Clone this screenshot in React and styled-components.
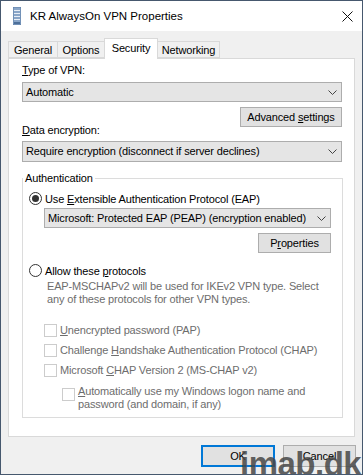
import React from "react";
import styled, { createGlobalStyle } from "styled-components";

const Global = createGlobalStyle`
  html, body { margin: 0; padding: 0; background: #fff; }
  * { box-sizing: border-box; }
`;

const FONT = `"Liberation Sans", Arial, sans-serif`;

const Window = styled.div`
  position: relative;
  width: 363px;
  height: 475px;
  border: 1px solid #46586e;
  display: flex;
  flex-direction: column;
  font-family: ${FONT};
  font-size: 11px;
  letter-spacing: -0.15px;
  color: #000;
  overflow: hidden;
`;

const TitleBar = styled.div`
  height: 30px;
  flex: none;
  background: #fff;
  display: flex;
  align-items: center;
  padding-left: 12px;
`;

const Title = styled.div`
  margin-left: 9px;
  font-size: 11.5px;
  letter-spacing: 0;
`;

const CloseBox = styled.div`
  margin-left: auto;
  margin-right: 9px;
  display: flex;
  align-items: center;
`;

const Body = styled.div`
  flex: 1;
  background: #f0f0f0;
  padding: 7px 6px 0 7px;
  display: flex;
  flex-direction: column;
`;

const TabStrip = styled.div`
  display: flex;
  align-items: flex-end;
  height: 20px;
`;

const Tab = styled.div`
  position: relative;
  width: ${(p) => p.$w}px;
  height: ${(p) => (p.$active ? 21 : 17)}px;
  margin-left: ${(p) => (p.$first ? 0 : -1)}px;
  margin-bottom: ${(p) => (p.$active ? -1 : 0)}px;
  padding-bottom: ${(p) => (p.$active ? 2 : 0)}px;
  z-index: ${(p) => (p.$active ? 2 : 1)};
  border: 1px solid #d9d9d9;
  border-bottom: ${(p) => (p.$active ? "none" : "1px solid #d9d9d9")};
  background: ${(p) => (p.$active ? "#fff" : "#f0f0f0")};
  display: flex;
  align-items: center;
  justify-content: center;
`;

const Panel = styled.div`
  width: 347px;
  height: 379px;
  background: #fff;
  border: 1px solid #d9d9d9;
  padding: 4px 12px 0 13px;
  display: flex;
  flex-direction: column;
`;

const Label = styled.div`
  line-height: 15px;
  margin-top: ${(p) => p.$mt || 0}px;
`;

const U = styled.span`
  text-decoration: underline;
  text-underline-offset: 1px;
`;

const Select = styled.div`
  height: ${(p) => p.$h || 20}px;
  margin-top: ${(p) => p.$mt || 0}px;
  margin-left: ${(p) => p.$ml || 0}px;
  background: #e5e5e5;
  border: 1px solid #adadad;
  display: flex;
  align-items: center;
  padding: 0 4px 0 3px;
  line-height: 15px;
`;

const Chevron = styled.svg`
  margin-left: auto;
  flex: none;
`;

const ButtonRow = styled.div`
  display: flex;
  justify-content: flex-end;
  gap: 8px;
  margin-top: ${(p) => p.$mt || 0}px;
`;

const Button = styled.div`
  width: ${(p) => p.$w}px;
  height: ${(p) => p.$h || 20}px;
  background: #e1e1e1;
  border: ${(p) => (p.$default ? "2px solid #0078d7" : "1px solid #adadad")};
  display: flex;
  align-items: center;
  justify-content: center;
`;

const Group = styled.fieldset`
  margin: 10px -1px 0 0;
  padding: 6px 11px 6px 6px;
  border: 1px solid #dcdcdc;
  min-width: 0;
`;

const Legend = styled.legend`
  padding: 0 2px;
  margin-left: -6px;
  line-height: 13px;
`;

const RadioRow = styled.div`
  display: flex;
  align-items: center;
  height: 15px;
  margin-top: ${(p) => p.$mt || 0}px;
`;

const RadioCircle = styled.span`
  width: 13px;
  height: 13px;
  border-radius: 50%;
  border: 1px solid #333;
  background: #fff;
  margin-right: 3px;
  display: flex;
  align-items: center;
  justify-content: center;
  flex: none;
  &::after {
    content: "";
    width: 7px;
    height: 7px;
    border-radius: 50%;
    background: ${(p) => (p.$checked ? "#333" : "transparent")};
  }
`;

const Note = styled.div`
  margin: 2px 0 0 18px;
  line-height: 13px;
  color: #6d6d6d;
`;

const CheckList = styled.div`
  display: flex;
  flex-direction: column;
  gap: 5px;
  margin: 17px 0 0 15px;
`;

const CheckRow = styled.div`
  display: flex;
  align-items: ${(p) => (p.$multi ? "flex-start" : "center")};
  min-height: 15px;
  margin-left: ${(p) => (p.$indent ? 18 : 0)}px;
  margin-top: ${(p) => (p.$indent ? 2 : 0)}px;
  color: #6d6d6d;
  line-height: ${(p) => (p.$multi ? 13 : 15)}px;
`;

const Box = styled.span`
  width: 13px;
  height: 13px;
  border: 1px solid #cccccc;
  background: #fff;
  flex: none;
  margin-right: 3px;
  margin-top: ${(p) => (p.$multi ? 3 : 0)}px;
`;

const Watermark = styled.div`
  position: absolute;
  left: 239px;
  top: 446px;
  font-family: "Liberation Sans", Arial, sans-serif;
  font-weight: bold;
  font-size: 33px;
  letter-spacing: -0.5px;
  line-height: 1;
  color: rgba(70, 70, 70, 0.85);
  pointer-events: none;
`;

function DropChevron() {
  return (
    <Chevron width="9" height="5" viewBox="0 0 9 5">
      <path d="M0.5 0.5 L4.5 4.5 L8.5 0.5" fill="none" stroke="#444" strokeWidth="1" />
    </Chevron>
  );
}

function AppIcon() {
  return (
    <svg width="8" height="18" viewBox="0 0 8 18">
      <rect x="0" y="0" width="8" height="18" fill="#8aa6c8" />
      <rect x="0" y="0" width="8" height="18" fill="none" stroke="#5b7ca6" strokeWidth="1" />
      {[3, 6, 9, 12].map((y) => (
        <rect key={y} x="1" y={y} width="6" height="1" fill="#e8eef6" />
      ))}
      <rect x="1" y="15" width="6" height="2" fill="#4d6f99" />
    </svg>
  );
}

export default function App() {
  return (
    <>
      <Global />
      <Window>
        <TitleBar>
          <AppIcon />
          <Title>KR AlwaysOn VPN Properties</Title>
          <CloseBox>
            <svg width="11" height="11" viewBox="0 0 11 11">
              <path d="M0.5 0.5 L10.5 10.5 M10.5 0.5 L0.5 10.5" stroke="#111" strokeWidth="1" />
            </svg>
          </CloseBox>
        </TitleBar>
        <Body>
          <TabStrip>
            <Tab $w={50} $first>General</Tab>
            <Tab $w={48}>Options</Tab>
            <Tab $w={54} $active>Security</Tab>
            <Tab $w={63}>Networking</Tab>
          </TabStrip>
          <Panel>
            <Label>
              <U>T</U>ype of VPN:
            </Label>
            <Select $mt={4}>
              Automatic
              <DropChevron />
            </Select>
            <ButtonRow $mt={5}>
              <Button $w={102}>
                <span>
                  Advanced <U>s</U>ettings
                </span>
              </Button>
            </ButtonRow>
            <Label $mt={-4}>
              <U>D</U>ata encryption:
            </Label>
            <Select $mt={3} $h={21}>
              Require encryption (disconnect if server declines)
              <DropChevron />
            </Select>
            <Group>
              <Legend>Authentication</Legend>
              <RadioRow>
                <RadioCircle $checked />
                <span>
                  Use <U>E</U>xtensible Authentication Protocol (EAP)
                </span>
              </RadioRow>
              <Select $mt={2} $ml={15}>
                Microsoft: Protected EAP (PEAP) (encryption enabled)
                <DropChevron />
              </Select>
              <ButtonRow $mt={5}>
                <Button $w={73}>
                  <span>
                    P<U>r</U>operties
                  </span>
                </Button>
              </ButtonRow>
              <RadioRow $mt={10}>
                <RadioCircle />
                <span>
                  Allow these <U>p</U>rotocols
                </span>
              </RadioRow>
              <Note>
                EAP-MSCHAPv2 will be used for IKEv2 VPN type. Select
                <br />
                any of these protocols for other VPN types.
              </Note>
              <CheckList>
                <CheckRow>
                  <Box />
                  <span>
                    <U>U</U>nencrypted password (PAP)
                  </span>
                </CheckRow>
                <CheckRow>
                  <Box />
                  <span>
                    Challenge <U>H</U>andshake Authentication Protocol (CHAP)
                  </span>
                </CheckRow>
                <CheckRow>
                  <Box />
                  <span>
                    Microsoft <U>C</U>HAP Version 2 (MS-CHAP v2)
                  </span>
                </CheckRow>
                <CheckRow $indent $multi>
                  <Box $multi />
                  <span>
                    <U>A</U>utomatically use my Windows logon name and
                    <br />
                    password (and domain, if any)
                  </span>
                </CheckRow>
              </CheckList>
            </Group>
          </Panel>
          <ButtonRow $mt={8}>
            <Button $w={74} $h={22} $default>
              OK
            </Button>
            <Button $w={73} $h={22}>
              Cancel
            </Button>
          </ButtonRow>
        </Body>
        <Watermark>imab.dk</Watermark>
      </Window>
    </>
  );
}
